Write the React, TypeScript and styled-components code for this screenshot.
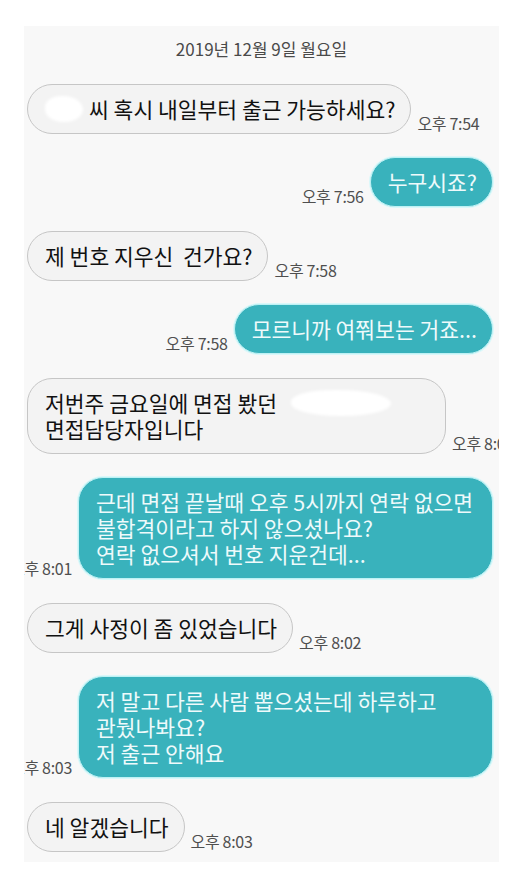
import React from 'react'
import styled, { createGlobalStyle } from 'styled-components'

const GlobalStyle = createGlobalStyle`
  html, body {
    margin: 0;
    padding: 0;
    background: #ffffff;
  }
  body {
    font-family: 'Noto Sans CJK KR', 'Noto Sans', sans-serif;
  }
`

const Page = styled.div`
  width: 531px;
  height: 886px;
  padding: 26px 32px 0 24px;
  box-sizing: border-box;
  background: #ffffff;
`

const ChatPanel = styled.div`
  width: 475px;
  height: 836px;
  background: #f8f8f8;
  overflow: hidden;
  display: flex;
  flex-direction: column;
  gap: 23.5px;
  padding: 11px 6px 0 3px;
  box-sizing: border-box;
`

const DateLabel = styled.div`
  text-align: center;
  font-size: 17px;
  line-height: 24px;
  color: #4a4a4a;
  margin-bottom: -1px;
  padding-left: 3px;
`

const Row = styled.div<{ $mine?: boolean }>`
  display: flex;
  align-items: flex-end;
  justify-content: ${({ $mine }) => ($mine ? 'flex-end' : 'flex-start')};
  gap: 6px;
`

const Bubble = styled.div<{ $mine?: boolean; $w?: number }>`
  flex-shrink: 0;
  box-sizing: border-box;
  width: ${({ $w }) => ($w ? `${$w}px` : 'auto')};
  padding: 11px 15px 11px 17px;
  font-size: 21.5px;
  line-height: 26px;
  font-weight: 400;
  white-space: pre;
  border-radius: 25px;
  background: ${({ $mine }) => ($mine ? '#39b2bc' : '#f3f3f3')};
  color: ${({ $mine }) => ($mine ? '#eefafb' : '#111111')};
  border: 1px solid ${({ $mine }) => ($mine ? '#bff1f4' : '#c6c6c6')};
  box-shadow: ${({ $mine }) => ($mine ? '0 0 0 1px #d9f8fa' : 'none')};
`

const Time = styled.span`
  flex-shrink: 0;
  font-size: 16px;
  line-height: 16px;
  color: #4f4f4f;
  white-space: nowrap;
  letter-spacing: -0.3px;
  margin-bottom: 3px;
`

const Redact = styled.span<{ $w: number }>`
  display: inline-block;
  width: ${({ $w }) => $w}px;
  height: 26px;
  vertical-align: top;
  background: #ffffff;
  border-radius: 45% 55% 50% 50%;
  filter: blur(1.5px);
`

type Msg = {
  mine?: boolean
  width?: number
  time: string
  body: React.ReactNode
}

const messages: Msg[] = [
  {
    time: '오후 7:54',
    body: (
      <>
        <Redact $w={38} style={{ marginRight: 6 }} />
        씨 혹시 내일부터 출근 가능하세요?
      </>
    ),
  },
  { mine: true, time: '오후 7:56', body: '누구시죠?' },
  { time: '오후 7:58', body: '제 번호 지우신  건가요?' },
  { mine: true, time: '오후 7:58', body: '모르니까 여쭤보는 거죠...' },
  {
    time: '오후 8:01',
    width: 419,
    body: (
      <>
        저번주 금요일에 면접 봤던
        <Redact $w={100} style={{ marginLeft: 14 }} />
        {'\n'}면접담당자입니다
      </>
    ),
  },
  {
    mine: true,
    width: 415,
    time: '오후 8:01',
    body: '근데 면접 끝날때 오후 5시까지 연락 없으면\n불합격이라고 하지 않으셨나요?\n연락 없으셔서 번호 지운건데...',
  },
  { time: '오후 8:02', body: '그게 사정이 좀 있었습니다' },
  {
    mine: true,
    width: 415,
    time: '오후 8:03',
    body: '저 말고 다른 사람 뽑으셨는데 하루하고\n관뒀나봐요?\n저 출근 안해요',
  },
  { time: '오후 8:03', body: '네 알겠습니다' },
]

const App = () => {
  return (
    <>
      <GlobalStyle />
      <Page>
        <ChatPanel>
          <DateLabel>2019년 12월 9일 월요일</DateLabel>
          {messages.map((m, i) => (
            <Row key={i} $mine={m.mine}>
              {m.mine && <Time>{m.time}</Time>}
              <Bubble $mine={m.mine} $w={m.width}>
                {m.body}
              </Bubble>
              {!m.mine && <Time>{m.time}</Time>}
            </Row>
          ))}
        </ChatPanel>
      </Page>
    </>
  )
}

export default App
